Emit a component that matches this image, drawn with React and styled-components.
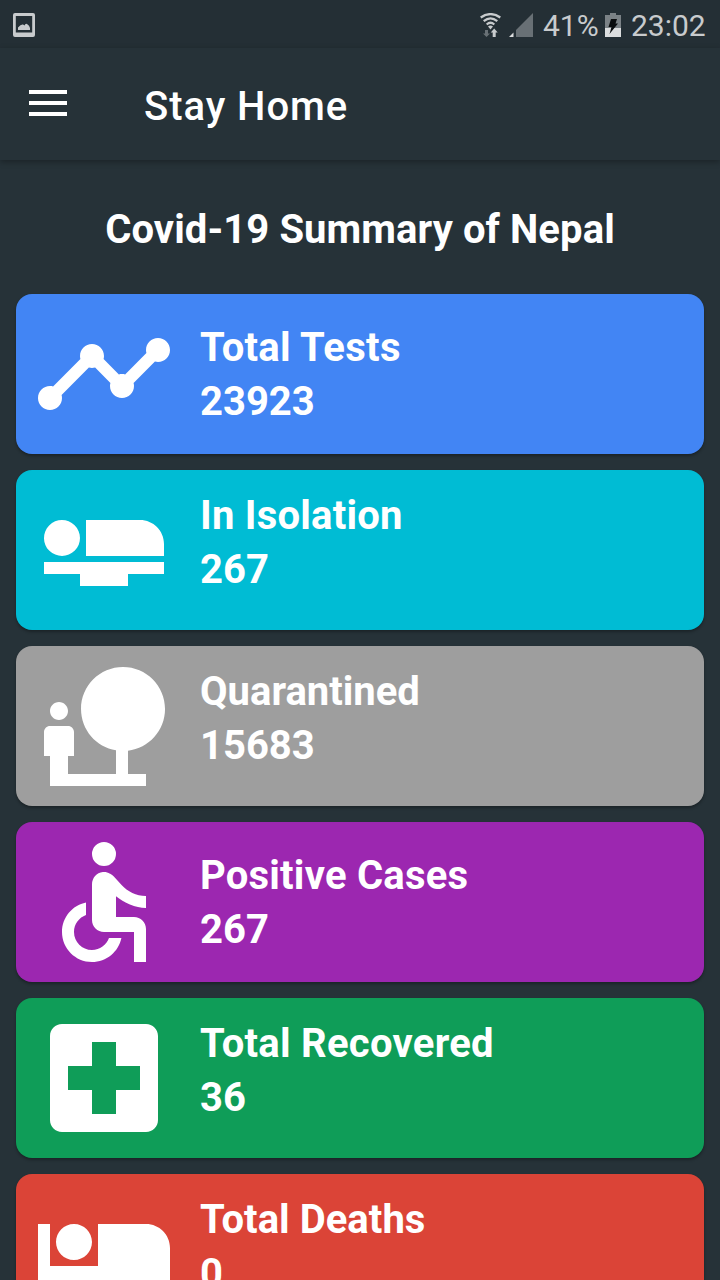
import React from "react";
import styled, { createGlobalStyle } from "styled-components";

const GlobalStyle = createGlobalStyle`
  * { box-sizing: border-box; }
  body {
    margin: 0;
    background: #263238;
    color: #fff;
    font-family: Roboto, "Liberation Sans", sans-serif;
  }
`;

const Screen = styled.div`
  width: 720px;
  height: 1280px;
  overflow: hidden;
  display: flex;
  flex-direction: column;
  background: #263238;
`;

const StatusBar = styled.header`
  flex: none;
  height: 48px;
  padding: 0 14px 0 13px;
  display: flex;
  align-items: center;
  justify-content: space-between;
  background: #242f35;
`;

const StatusGroup = styled.div`
  display: flex;
  align-items: center;
  height: 48px;
`;

const StatusIcon = styled.svg`
  display: block;
  flex: none;
  margin-top: 2px;
  margin-right: ${(p) => p.$gap || 0}px;
`;

const StatusText = styled.span`
  font-size: 30px;
  line-height: 48px;
  padding-top: 4px;
  color: #c8cbcd;
  width: ${(p) => p.$width}px;
  margin-right: ${(p) => p.$gap || 0}px;
  white-space: nowrap;
`;

const AppBar = styled.nav`
  flex: none;
  height: 112px;
  padding-left: 29px;
  display: flex;
  align-items: center;
  box-shadow: 0 2px 6px rgba(0, 0, 0, 0.3);
`;

const MenuButton = styled.button`
  width: 38px;
  height: 26px;
  padding: 0;
  margin: 0 77px 2px 0;
  border: 0;
  background: none;
  display: flex;
  flex-direction: column;
  justify-content: space-between;
`;

const MenuBar = styled.span`
  width: 100%;
  height: 4px;
  background: #fff;
`;

const AppTitle = styled.div`
  font-size: 40px;
  line-height: 48px;
  font-weight: 500;
  letter-spacing: 0.95px;
  padding-top: 6px;
`;

const Heading = styled.h1`
  flex: none;
  margin: 0;
  padding-top: 43px;
  height: 134px;
  text-align: center;
  font-size: 40px;
  line-height: 54px;
  font-weight: 700;
  letter-spacing: 0.09px;
`;

const CardList = styled.main`
  display: flex;
  flex-direction: column;
  gap: 16px;
  padding: 0 16px;
`;

const Card = styled.section`
  flex: none;
  height: 160px;
  padding: 8px 16px;
  display: flex;
  gap: 24px;
  border-radius: 16px;
  background: ${(p) => p.$color};
  box-shadow: 0 2px 3px rgba(0, 0, 0, 0.3);
`;

const CardIcon = styled.svg`
  flex: none;
  width: 144px;
  height: 144px;
  fill: #fff;
`;

const CardText = styled.div`
  padding-top: ${(p) => (p.$centered ? 19 : 11)}px;
  font-size: 40px;
  line-height: 54px;
  font-weight: 700;
  white-space: nowrap;
`;

const CardLine = styled.div`
  letter-spacing: ${(p) => p.$spacing || 0}px;
`;

const cards = [
  {
    label: "Total Tests",
    value: "23923",
    color: "#4285f4",
    spacing: 0.28,
    centered: true,
    path: "M23 8c0 1.1-.9 2-2 2-.18 0-.35-.02-.51-.07l-3.56 3.55c.05.16.07.34.07.52 0 1.1-.9 2-2 2s-2-.9-2-2c0-.18.02-.36.07-.52l-2.55-2.55c-.16.05-.34.07-.52.07s-.36-.02-.52-.07l-4.55 4.56c.05.16.07.33.07.51 0 1.1-.9 2-2 2s-2-.9-2-2 .9-2 2-2c.18 0 .35.02.51.07l4.56-4.55C8.02 9.36 8 9.18 8 9c0-1.1.9-2 2-2s2 .9 2 2c0 .18-.02.36-.07.52l2.55 2.55c.16-.05.34-.07.52-.07s.36.02.52.07l3.55-3.56C19.02 8.35 19 8.18 19 8c0-1.1.9-2 2-2s2 .9 2 2z",
  },
  {
    label: "In Isolation",
    value: "267",
    color: "#00bcd4",
    spacing: 0.22,
    path: "M22 11v2H9V7h9c2.21 0 4 1.79 4 4zM2 14v2h6v2h8v-2h6v-2H2zm5.14-1.9c1.16-1.19 1.14-3.08-.04-4.24-1.19-1.16-3.08-1.14-4.24.04-1.16 1.19-1.14 3.08.04 4.24 1.19 1.16 3.08 1.14 4.24-.04z",
  },
  {
    label: "Quarantined",
    value: "15683",
    color: "#9e9e9e",
    path: "M22.17 9.17c0-3.87-3.13-7-7-7s-7 3.13-7 7c0 3.47 2.52 6.34 5.83 6.89V20H6v-3h1v-4c0-.55-.45-1-1-1H3c-.55 0-1 .45-1 1v4h1v5h16v-2h-3v-3.88c3.47-.41 6.17-3.36 6.17-6.95zM4.5 11c.83 0 1.5-.67 1.5-1.5S5.33 8 4.5 8 3 8.67 3 9.5 3.67 11 4.5 11z",
  },
  {
    label: "Positive Cases",
    value: "267",
    color: "#9c27b0",
    spacing: 0.22,
    centered: true,
    path: "M12 2a2 2 0 1 0 0 4 2 2 0 0 0 0-4zM19 13v-2c-1.54.02-3.09-.75-4.07-1.83l-1.29-1.43c-.17-.19-.38-.34-.61-.45-.01 0-.01-.01-.02-.01H13c-.35-.2-.75-.3-1.19-.26C10.76 7.11 10 8.04 10 9.09V15c0 1.1.9 2 2 2h5v5h2v-5.5c0-1.1-.9-2-2-2h-3v-3.45c1.29 1.07 3.25 1.94 5 1.95zm-6.17 5c-.41 1.16-1.52 2-2.83 2-1.66 0-3-1.34-3-3 0-1.31.84-2.41 2-2.83V12.1c-2.28.46-4 2.48-4 4.9 0 2.76 2.24 5 5 5 2.42 0 4.44-1.72 4.9-4h-2.07z",
  },
  {
    label: "Total Recovered",
    value: "36",
    color: "#0f9d58",
    spacing: 0.27,
    path: "M19 3H5c-1.1 0-2 .9-2 2v14c0 1.1.9 2 2 2h14c1.1 0 2-.9 2-2V5c0-1.1-.9-2-2-2zm-1 11h-4v4h-4v-4H6v-4h4V6h4v4h4v4z",
  },
  {
    label: "Total Deaths",
    value: "0",
    color: "#db4437",
    spacing: 0.04,
    path: "M7 13c1.65 0 3-1.35 3-3S8.65 7 7 7s-3 1.35-3 3 1.35 3 3 3zm12-6h-8v7H3V7H1v10h22v-6c0-2.21-1.79-4-4-4z",
  },
];

function PictureIcon() {
  return (
    <StatusIcon width="22" height="24" viewBox="0 0 22 24">
      <path
        fill="#c8cbcd"
        fillRule="evenodd"
        d="M2 0h18a2 2 0 0 1 2 2v20a2 2 0 0 1-2 2H2a2 2 0 0 1-2-2V2a2 2 0 0 1 2-2zM2.800 3v16.500h16.400V3z"
      />
      <path fill="#c8cbcd" d="M5 17v-2.500q3-3.500 5-3 1 .3 1.500 1 1-2.500 2.500-1.500 2.500 1.500 3 4v2z" />
    </StatusIcon>
  );
}

function WifiIcon() {
  return (
    <StatusIcon width="21" height="24" viewBox="0 0 21 24" $gap={8}>
      <g fill="none" stroke="#c8cbcd" strokeWidth="2.200">
        <path d="M.7 4.500Q10.500-2.400 20.300 4.500" />
        <path d="M3.700 8.100Q10.500 2.500 17.300 8.100" />
        <path d="M6.700 11.500Q10.500 8 14.300 11.500" />
      </g>
      <path fill="#c8cbcd" d="M8 13.500q2.500-2 5 0l-2.500 3z" />
      <path fill="#687075" d="M5 17h3v3.500h2L6.500 24 3 20.500h2z" />
      <path fill="#c8cbcd" d="M14.200 15.500l3.500 4h-2V24h-3v-4.500h-2z" />
    </StatusIcon>
  );
}

function SignalIcon() {
  return (
    <StatusIcon width="24" height="24" viewBox="0 0 24 24" $gap={10}>
      <path fill="#687075" d="M24 0v24H7V17z" />
      <path fill="#dcdedf" d="M4.500 19.500V24H0z" />
    </StatusIcon>
  );
}

function BatteryIcon() {
  return (
    <StatusIcon width="16" height="24" viewBox="0 0 16 24" $gap={10}>
      <path fill="#7b8286" d="M5 0h6v2h5v13H0V2h5z" />
      <path fill="#dcdedf" d="M0 15h16v9H0z" />
      <path fill="#0a0d0e" d="M6 6h6l-1.500 4.500H13L4.500 21 6.500 14H3.500z" />
    </StatusIcon>
  );
}

export default function App() {
  return (
    <>
      <GlobalStyle />
      <Screen>
        <StatusBar>
          <PictureIcon />
          <StatusGroup>
            <WifiIcon />
            <SignalIcon />
            <StatusText $width={56} $gap={6}>41%</StatusText>
            <BatteryIcon />
            <StatusText $width={75}>23:02</StatusText>
          </StatusGroup>
        </StatusBar>
        <AppBar>
          <MenuButton aria-label="Menu">
            <MenuBar />
            <MenuBar />
            <MenuBar />
          </MenuButton>
          <AppTitle>Stay Home</AppTitle>
        </AppBar>
        <Heading>Covid-19 Summary of Nepal</Heading>
        <CardList>
          {cards.map((card) => (
            <Card key={card.label} $color={card.color}>
              <CardIcon viewBox="0 0 24 24">
                <path d={card.path} />
              </CardIcon>
              <CardText $centered={card.centered}>
                <CardLine $spacing={card.spacing}>{card.label}</CardLine>
                <CardLine>{card.value}</CardLine>
              </CardText>
            </Card>
          ))}
        </CardList>
      </Screen>
    </>
  );
}
